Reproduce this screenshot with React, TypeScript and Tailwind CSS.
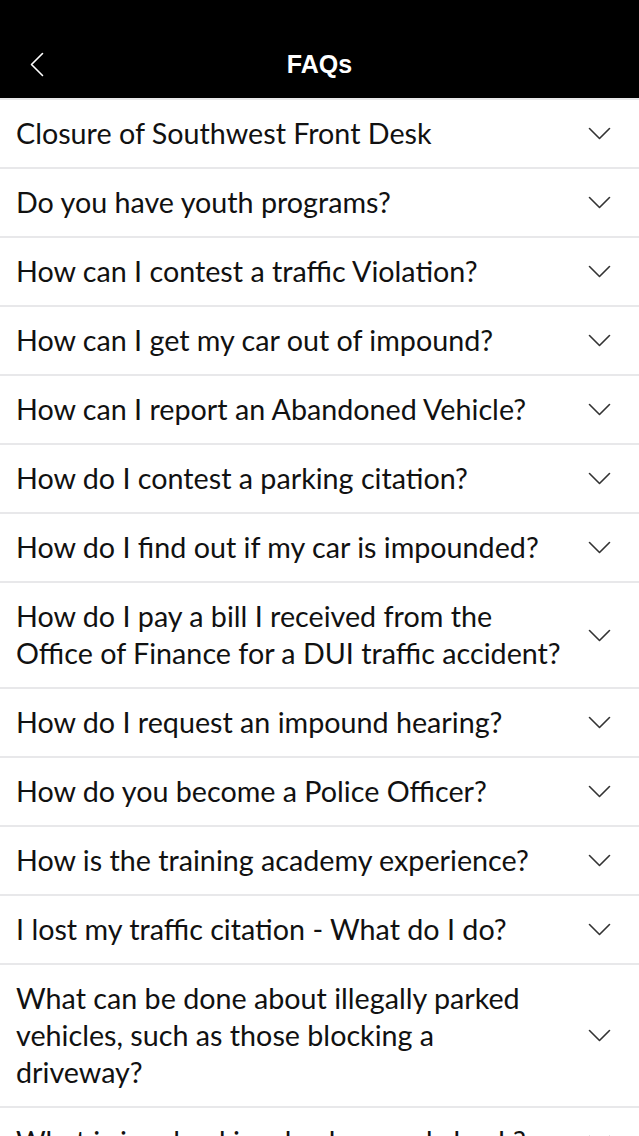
const faqs = [
  "Closure of Southwest Front Desk",
  "Do you have youth programs?",
  "How can I contest a traffic Violation?",
  "How can I get my car out of impound?",
  "How can I report an Abandoned Vehicle?",
  "How do I contest a parking citation?",
  "How do I find out if my car is impounded?",
  "How do I pay a bill I received from the Office of Finance for a DUI traffic accident?",
  "How do I request an impound hearing?",
  "How do you become a Police Officer?",
  "How is the training academy experience?",
  "I lost my traffic citation - What do I do?",
  "What can be done about illegally parked vehicles, such as those blocking a driveway?",
  "What is involved in a background check?",
];

function ChevronDown() {
  return (
    <svg width="23" height="13" viewBox="0 0 23 13" fill="none" className="shrink-0">
      <path d="M1.5 1.5 L11.5 11.5 L21.5 1.5" stroke="#333" strokeWidth="1.6" strokeLinecap="round" strokeLinejoin="round" />
    </svg>
  );
}

export default function App() {
  return (
    <div className="h-[1136px] w-[639px] overflow-hidden bg-white">
      {/* Header */}
      <div className="h-[98px] bg-black flex items-end pb-[15px] relative">
        <button className="absolute left-[29px] top-[52px]">
          <svg width="16" height="25" viewBox="0 0 16 25" fill="none">
            <path d="M13.5 1.5 L2.5 12.5 L13.5 23.5" stroke="#fff" strokeWidth="1.6" strokeLinecap="round" strokeLinejoin="round" />
          </svg>
        </button>
        <h1 className="w-full text-center text-white text-[25px] font-bold font-['Liberation_Sans',Arial,sans-serif]">
          FAQs
        </h1>
      </div>
      {/* List */}
      <div className="font-['Lato','Open_Sans',sans-serif] text-[#111]">
        {faqs.map((q, idx) => {
          const key = `${idx} ${q}`;
          return (
            <div
              key={key}
              className="flex items-center justify-between border-t-2 border-[#e8e8ea] pl-4 pr-[28px] py-[15px]"
            >
              <p className="text-[28.7px] leading-[37px] max-w-[552px]">{q}</p>
              <ChevronDown />
            </div>
          );
        })}
      </div>
    </div>
  );
}
